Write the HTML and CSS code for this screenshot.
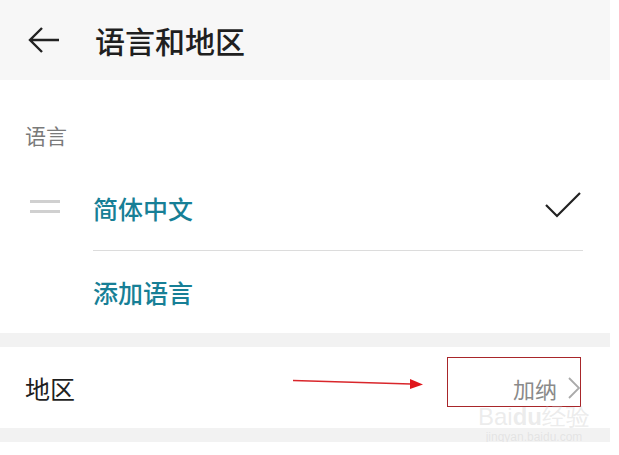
FILE: index.html
```html
<!DOCTYPE html>
<html>
  <head>
    <title>语言和地区</title>
    <link rel="stylesheet" href="styles.css">
  </head>
  <body>
    <div class="page">
      <div class="header">
        <svg class="back" width="34" height="28" viewBox="0 0 34 28">
          <path d="M32 14H3M15 2L3 14l12 12" fill="none" stroke="#222" stroke-width="2.4"/>
        </svg>
        <span class="title">语言和地区</span>
      </div>

      <div class="section">
        <div class="label">语言</div>
        <div class="row lang-row">
          <span class="handle"></span>
          <span class="lang">简体中文</span>
          <svg class="check" width="36" height="26" viewBox="0 0 36 26">
            <path d="M1 13l11 11L35 1" fill="none" stroke="#222" stroke-width="2.2"/>
          </svg>
        </div>
        <div class="divider"></div>
        <div class="row add-row">
          <span class="lang">添加语言</span>
        </div>
      </div>

      <div class="band"></div>

      <div class="region">
        <span class="region-name">地区</span>
        <span class="region-value">加纳</span>
        <svg class="chevron" width="12" height="22" viewBox="0 0 12 22">
          <path d="M1 1l10 10L1 21" fill="none" stroke="#aaa" stroke-width="1.8"/>
        </svg>
        <svg class="pointer" width="135" height="14" viewBox="0 0 135 14">
          <path d="M0 3.5L118 7" stroke="#d9262b" stroke-width="1.4" fill="none"/>
          <path d="M117 2L130 7.5L117 12z" fill="#e0161c"/>
        </svg>
        <div class="mark-box"></div>
      </div>

      <div class="band"></div>

      <div class="watermark">
        <span class="wm-big">Bai<b>du</b>经验</span>
        <span class="wm-small">jingyan.baidu.com</span>
      </div>
    </div>
  </body>
</html>
```

FILE: styles.css
```css
/* Settings page: language and region */
body {
  margin: 0;
  background: #fff;
  font-family: "Noto Sans CJK SC", "Noto Sans", sans-serif;
}
.page {
  position: relative;
  width: 610px;
}
.header {
  height: 80px;
  background: #f7f7f7;
  display: flex;
  align-items: center;
  padding-left: 27px;
}
.back {
  display: block;
  margin-top: -1px;
}
.title {
  margin-left: 34px;
  font-size: 30px;
  font-weight: 500;
  color: #1f1f1f;
  line-height: 40px;
}
.section {
  padding-top: 42px;
}
.label {
  padding-left: 25px;
  font-size: 21px;
  line-height: 26px;
  color: #7a7a7a;
}
.row {
  display: flex;
  align-items: center;
}
.lang-row {
  height: 85px;
  margin-top: 17px;
}
.add-row {
  height: 82px;
  padding-left: 93px;
}
.handle {
  width: 30px;
  height: 7px;
  margin-left: 30px;
  margin-right: 33px;
  border-top: 3px solid #d0d0d0;
  border-bottom: 3px solid #d0d0d0;
  margin-top: -2px;
}
.lang {
  font-size: 25px;
  font-weight: 500;
  color: #177f96;
  line-height: 34px;
}
.check {
  margin-left: auto;
  margin-right: 29px;
  margin-top: -6px;
}
.divider {
  height: 1px;
  background: #dcdcdc;
  margin-left: 93px;
  margin-right: 27px;
}
.band {
  height: 14px;
  background: #f2f2f2;
}
.region {
  position: relative;
  height: 81px;
  display: flex;
  align-items: center;
  padding-left: 25px;
}
.region-name {
  font-size: 25px;
  color: #1f1f1f;
}
.region-value {
  margin-left: auto;
  font-size: 22px;
  color: #8a8a8a;
}
.chevron {
  margin-left: 11px;
  margin-right: 30px;
}
.pointer {
  position: absolute;
  left: 293px;
  top: 30px;
}
.mark-box {
  position: absolute;
  left: 447px;
  top: 10px;
  width: 132px;
  height: 48px;
  border: 1px solid #a8262a;
}
.watermark {
  position: absolute;
  left: 478px;
  top: 404px;
  display: flex;
  flex-direction: column;
  align-items: center;
  color: rgba(200, 200, 200, 0.35);
  font-family: "Liberation Sans", sans-serif;
}
.wm-big {
  font-size: 24px;
  line-height: 26px;
}
.wm-small {
  font-size: 12px;
  line-height: 14px;
}
```
